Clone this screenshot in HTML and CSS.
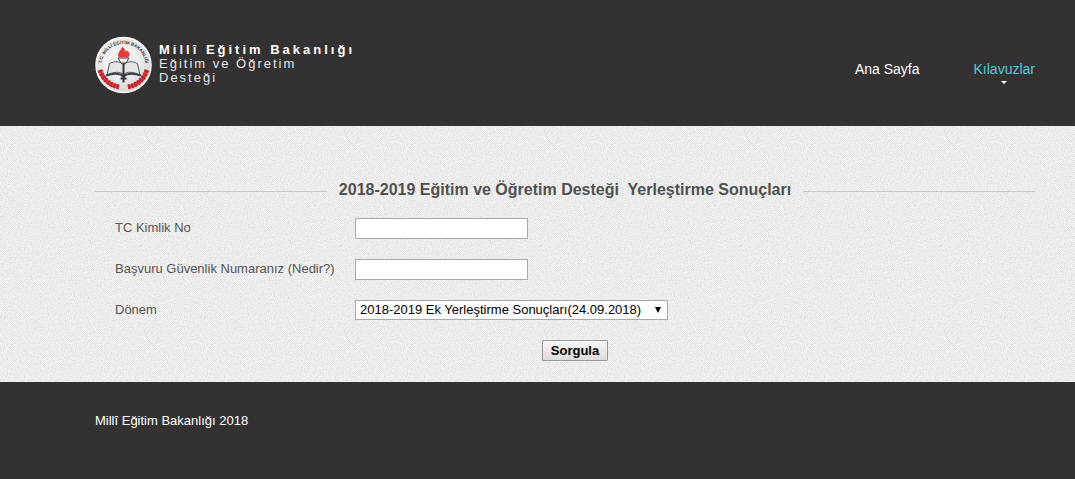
FILE: index.html
```html
<!DOCTYPE html>
<html lang="tr">
  <head>
    <meta charset="UTF-8" />
    <meta name="viewport" content="width=device-width, initial-scale=1.0" />
    <title>Eğitim ve Öğretim Desteği</title>
    <link rel="stylesheet" href="styles.css">
  </head>
  <body>
    <header class="header">
      <a class="logo" href="#">
        <svg class="emblem" viewBox="0 0 114 114" aria-hidden="true">
          <defs>
            <radialGradient id="disc" cx="45%" cy="40%" r="60%">
              <stop offset="0.5" stop-color="#f0f0f0" />
              <stop offset="1" stop-color="#d6d6d6" />
            </radialGradient>
            <path id="ring" d="M15 72A44 44 0 1 1 99 72" />
            <g id="laurel">
              <path d="M10 67C15 84 28 97 48 101" fill="none" stroke="#cf4a50" stroke-width="7" />
              <path d="M10 67C15 84 28 97 48 101" fill="none" stroke="#c4252f" stroke-width="10" stroke-dasharray="5 2" />
            </g>
          </defs>
          <circle cx="57" cy="57" r="55" fill="url(#disc)" stroke="#fafafa" stroke-width="3" />
          <text class="emblem-text"><textPath href="#ring" startOffset="50%">T.C. MİLLÎ EĞİTİM BAKANLIĞI</textPath></text>
          <use href="#laurel" />
          <use href="#laurel" transform="translate(114 0) scale(-1 1)" />
          <!-- open book -->
          <g fill="#e4e4e4" stroke="#55585c" stroke-width="2" stroke-linejoin="round">
            <path d="M57 76C50 70 38 70 24 77L29 54C40 48 51 50 57 57Z" />
            <path d="M57 76C64 70 76 70 90 77L85 54C74 48 63 50 57 57Z" />
          </g>
          <path d="M22 78C38 73 50 74 57 80C64 74 76 73 92 78" fill="none" stroke="#3d4147" stroke-width="4" />
          <!-- torch -->
          <path d="M57 50V92M51 84H63" stroke="#34373b" stroke-width="4" />
          <path d="M46 43H68L62 53H52Z" fill="#eee" stroke="#4b4b4e" stroke-width="2" />
          <path d="M48 42C43 33 51 30 54 21C60 23 60 27 61 31L64 28C71 34 70 38 66 42Z" fill="#e83b35" />
        </svg>
        <span class="logo-text">
          <strong>Millî Eğitim Bakanlığı</strong>
          <span>Eğitim ve Öğretim</span>
          <span>Desteği</span>
        </span>
      </a>
      <nav class="menu">
        <a href="#">Ana Sayfa</a>
        <a class="has-sub" href="#">Kılavuzlar</a>
      </nav>
    </header>

    <main class="content">
      <h1 class="title">2018-2019 Eğitim ve Öğretim Desteği&nbsp; Yerleştirme Sonuçları</h1>
      <form class="query">
        <label for="tcNo">TC Kimlik No</label>
        <input type="text" id="tcNo" />
        <label for="guvenlikNo">Başvuru Güvenlik Numaranız (Nedir?)</label>
        <input type="text" id="guvenlikNo" />
        <label for="donem">Dönem</label>
        <select id="donem">
          <option>2018-2019 Ek Yerleştirme Sonuçları(24.09.2018)</option>
        </select>
        <button type="button">Sorgula</button>
      </form>
    </main>

    <footer class="footer">Millî Eğitim Bakanlığı 2018</footer>
  </body>
</html>
```
FILE: styles.css
```css
* {
  box-sizing: border-box;
}

body {
  margin: 0;
  min-height: 100vh;
  font-family: "Liberation Sans", Arial, sans-serif;
  font-size: 13px;
  line-height: 16px;
  color: #555;
  background-color: #343132;
}

.header,
.content,
.footer {
  padding-left: 95px;
  padding-right: 40px;
}

.header {
  display: flex;
  justify-content: space-between;
  align-items: flex-start;
  padding-top: 36px;
  padding-bottom: 32px;
}

.logo {
  display: flex;
  gap: 7px;
  color: #e6e6e6;
  text-decoration: none;
}

.emblem {
  width: 57px;
  height: 58px;
}

.emblem-text {
  font-size: 9px;
  font-weight: bold;
  text-anchor: middle;
  fill: #333;
}

.logo-text {
  display: flex;
  flex-direction: column;
  padding-top: 7px;
  line-height: 14px;
  letter-spacing: 2px;
}

.logo-text strong {
  letter-spacing: 3px;
  color: #fff;
}

.menu {
  display: flex;
  gap: 54px;
  padding-top: 25px;
  font-size: 14px;
}

.menu a {
  color: #fff;
  text-decoration: none;
}

.menu .has-sub {
  color: #4fcbdc;
}

/* small arrow under items with a submenu */
.has-sub::after {
  content: "";
  display: block;
  width: 0;
  margin: 4px auto 0;
  border: 3px solid transparent;
  border-top-color: #fff;
  border-bottom: 0;
}

.content {
  padding-top: 54px;
  padding-bottom: 21px;
  background-color: #ececec;
  background-image: url("data:image/svg+xml,%3Csvg xmlns='http://www.w3.org/2000/svg' width='200' height='200'%3E%3Cfilter id='n' x='0' y='0' width='1' height='1'%3E%3CfeTurbulence type='fractalNoise' baseFrequency='.7' numOctaves='2' stitchTiles='stitch'/%3E%3CfeColorMatrix values='0 0 0 0 .5 0 0 0 0 .5 0 0 0 0 .5 1 0 0 0 -.45'/%3E%3C/filter%3E%3Crect width='200' height='200' filter='url(%23n)'/%3E%3C/svg%3E"),
    repeating-conic-gradient(#f4f4f4 0 25%, #ececec 0 50%);
  background-size: 200px 200px, 2px 2px;
}

.title {
  display: flex;
  align-items: center;
  gap: 12px;
  margin: 0 0 18px;
  font-size: 16px;
  line-height: 20px;
  color: #505050;
}

.title::before,
.title::after {
  content: "";
  flex: 1;
  border-top: 1px solid #c9c9c9;
  margin-top: 2px;
}

.query {
  display: grid;
  grid-template-columns: 220px 1fr;
  gap: 20px;
  justify-items: start;
  align-items: center;
  padding-left: 20px;
}

.query label {
  line-height: 18px;
  padding-bottom: 1px;
}

.query input {
  width: 173px;
  height: 21px;
  border: 1px solid #a9a9a9;
  background-color: #fff;
}

.query select {
  appearance: none;
  width: 313px;
  height: 20px;
  padding: 0 18px 0 4px;
  border: 1px solid #a9a9a9;
  border-radius: 0;
  font: inherit;
  color: #000;
  background: #fff url("data:image/svg+xml,%3Csvg xmlns='http://www.w3.org/2000/svg' width='6' height='6'%3E%3Cpath d='M0 0H6L3 6Z'/%3E%3C/svg%3E") no-repeat right 6px center;
}

.query button {
  grid-column: 1 / -1;
  justify-self: center;
  height: 21px;
  padding: 0 8px;
  border: 1px solid #999;
  border-radius: 1px;
  font: inherit;
  font-weight: bold;
  color: #000;
  background: linear-gradient(#f6f6f6, #dcdcdc);
}

.footer {
  padding-top: 31px;
  padding-bottom: 31px;
  color: #fff;
}
```
